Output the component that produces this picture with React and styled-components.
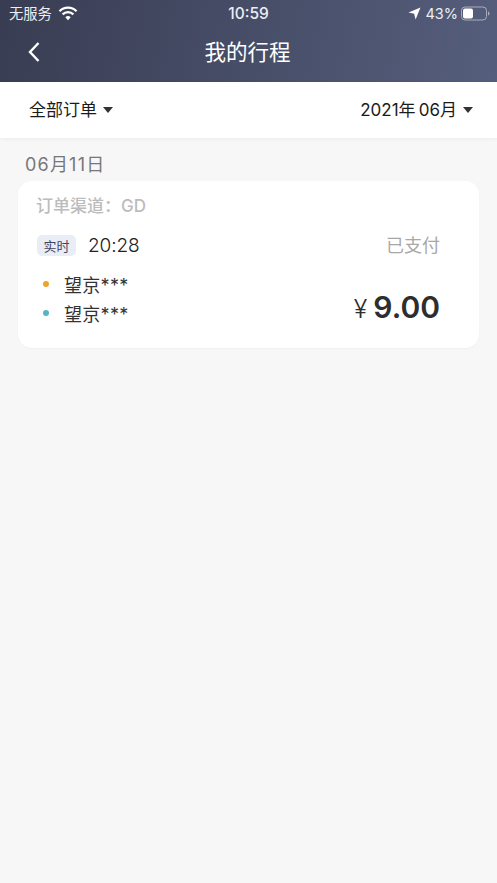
import React from "react";
import styled, { createGlobalStyle } from "styled-components";

const GlobalStyle = createGlobalStyle`
  html, body {
    margin: 0;
    padding: 0;
    background: #f7f7f7;
    font-family: "Inter", "Noto Sans CJK SC", sans-serif;
  }
`;

const Page = styled.div`
  width: 497px;
  height: 883px;
  overflow: hidden;
  background: #f7f7f7;
  display: flex;
  flex-direction: column;
`;

const Header = styled.header`
  height: 82px;
  box-sizing: border-box;
  background: linear-gradient(100deg, #393d53 0%, #555e7c 100%);
  color: #fff;
  display: flex;
  flex-direction: column;
`;

const StatusBar = styled.div`
  height: 26px;
  padding: 0 7px 0 9px;
  display: flex;
  align-items: center;
  justify-content: space-between;
  font-size: 14px;
  color: #eceef3;
`;

const StatusSide = styled.div`
  flex: 1;
  display: flex;
  align-items: center;
  justify-content: ${({ $end }) => ($end ? "flex-end" : "flex-start")};
  gap: ${({ $gap }) => $gap || 4}px;
`;

const Carrier = styled.span`
  font-size: 14.3px;
  margin-bottom: 2px;
`;

const Clock = styled.span`
  margin-right: 2px;
  font-size: 15.5px;
  font-weight: 500;
`;

const Battery = styled.span`
  font-size: 14.5px;
  margin-right: -1px;
`;

const NavBar = styled.div`
  flex: 1;
  position: relative;
  display: flex;
  align-items: center;
  justify-content: center;
  padding: 0 2px 4px 0;
`;

const BackButton = styled.div`
  position: absolute;
  left: 27px;
  top: 15px;
  display: flex;
`;

const Title = styled.h1`
  margin: 0;
  font-size: 21.5px;
  font-weight: 400;
  line-height: 28px;
`;

const FilterBar = styled.div`
  height: 56px;
  background: #fff;
  padding: 0 24px 0 29px;
  display: flex;
  align-items: center;
  justify-content: space-between;
  box-shadow: 0 1px 4px rgba(0, 0, 0, 0.05);
`;

const Filter = styled.div`
  display: flex;
  align-items: center;
  gap: 6px;
  padding-bottom: 3px;
  font-size: 17px;
  color: #1b1b1b;
`;

const Caret = styled.span`
  width: 0;
  height: 0;
  margin-top: 3px;
  border-left: 5px solid transparent;
  border-right: 5px solid transparent;
  border-top: 6px solid #333;
`;

const Content = styled.main`
  padding: 14px 18px 0;
`;

const DateLabel = styled.div`
  padding-left: 7px;
  font-size: 18px;
  line-height: 25px;
  letter-spacing: 1.2px;
  color: #777;
`;

const Card = styled.section`
  margin-top: 4px;
  height: 167px;
  box-sizing: border-box;
  padding: 13px 39px 0 19px;
  background: #fff;
  border-radius: 14px;
  box-shadow: 0 1px 2px rgba(0, 0, 0, 0.03);
`;

const Channel = styled.div`
  font-size: 17px;
  line-height: 24px;
  margin-left: -1px;
  color: #bcbcbc;
  font-weight: 500;
`;

const TimeRow = styled.div`
  margin-top: 15px;
  display: flex;
  align-items: center;
  height: 24px;
`;

const Tag = styled.span`
  width: 39px;
  height: 21px;
  display: flex;
  align-items: center;
  justify-content: center;
  border-radius: 5px;
  background: #e9edf6;
  color: #3f4560;
  font-size: 13px;
`;

const Time = styled.span`
  margin-left: 12px;
  font-size: 19px;
  font-weight: 300;
  letter-spacing: -0.1px;
  color: #222;
`;

const Status = styled.span`
  margin-left: auto;
  margin-bottom: 2px;
  font-size: 18px;
  color: #a8a8a8;
`;

const BottomRow = styled.div`
  margin-top: 15px;
  display: flex;
  justify-content: space-between;
`;

const Stops = styled.div`
  display: flex;
  flex-direction: column;
  gap: 5px;
`;

const Stop = styled.div`
  display: flex;
  align-items: center;
  height: 24px;
  padding-left: 6px;
  font-size: 18px;
  letter-spacing: 0.3px;
  color: #333;
`;

const Dot = styled.span`
  width: 6px;
  height: 6px;
  margin-right: 15px;
  border-radius: 50%;
  background: ${({ $color }) => $color};
`;

const Price = styled.div`
  align-self: flex-end;
  display: flex;
  align-items: baseline;
  gap: 6px;
  color: #2e2e2e;
`;

const Currency = styled.span`
  font-size: 25px;
  font-weight: 300;
`;

const Amount = styled.span`
  font-size: 30px;
  font-weight: 600;
`;

const WifiIcon = () => (
  <svg width="20" height="15" viewBox="0 0 20 15" fill="none" stroke="#fff" strokeWidth="2.3">
    <path d="M1.5 5.2a12 12 0 0 1 17 0" />
    <path d="M4.6 8.4a7.7 7.7 0 0 1 10.8 0" />
    <path d="M10 14.2l-2.7-2.9a3.8 3.8 0 0 1 5.4 0z" fill="#fff" stroke="none" />
  </svg>
);

const LocationIcon = () => (
  <svg width="13" height="13" viewBox="0 0 12 12">
    <path d="M11.5.5 7 11.5 5.7 6.3.5 5z" fill="#fff" />
  </svg>
);

const BatteryIcon = () => (
  <svg width="29" height="15" viewBox="0 0 29 15">
    <rect x="0.5" y="1" width="25" height="13" rx="3.5" fill="none" stroke="#a9adba" />
    <rect x="2" y="2.5" width="10" height="10" rx="2" fill="#fff" />
    <path d="M27 5.5c1 .4 1.5 1.1 1.5 2s-.5 1.6-1.5 2z" fill="#a9adba" />
  </svg>
);

const BackIcon = () => (
  <svg width="14" height="22" viewBox="0 0 14 22" fill="none" stroke="#fff" strokeWidth="2.4">
    <path d="M11.5 2 3 11l8.5 9" />
  </svg>
);

export default function App() {
  return (
    <Page>
      <GlobalStyle />
      <Header>
        <StatusBar>
          <StatusSide $gap={6}>
            <Carrier>无服务</Carrier>
            <WifiIcon />
          </StatusSide>
          <Clock>10:59</Clock>
          <StatusSide $end>
            <LocationIcon />
            <Battery>43%</Battery>
            <BatteryIcon />
          </StatusSide>
        </StatusBar>
        <NavBar>
          <BackButton>
            <BackIcon />
          </BackButton>
          <Title>我的行程</Title>
        </NavBar>
      </Header>
      <FilterBar>
        <Filter>
          全部订单
          <Caret />
        </Filter>
        <Filter>
          2021年{"\u2009"}06月
          <Caret />
        </Filter>
      </FilterBar>
      <Content>
        <DateLabel>06月11日</DateLabel>
        <Card>
          <Channel>订单渠道：GD</Channel>
          <TimeRow>
            <Tag>实时</Tag>
            <Time>20:28</Time>
            <Status>已支付</Status>
          </TimeRow>
          <BottomRow>
            <Stops>
              <Stop>
                <Dot $color="#eca42c" />
                望京***
              </Stop>
              <Stop>
                <Dot $color="#56b5c0" />
                望京***
              </Stop>
            </Stops>
            <Price>
              <Currency>¥</Currency>
              <Amount>9.00</Amount>
            </Price>
          </BottomRow>
        </Card>
      </Content>
    </Page>
  );
}
